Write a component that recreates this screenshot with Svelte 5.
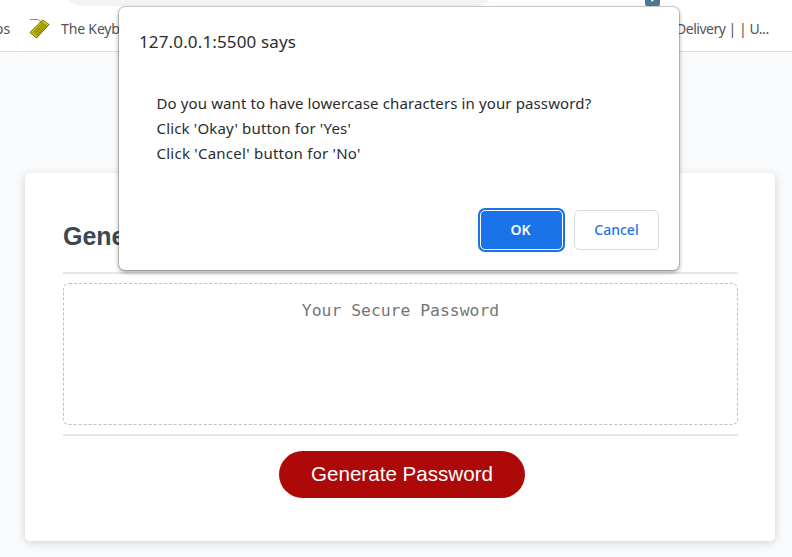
<script>
  const lines = [
    { text: 'Do you want to have lowercase characters in your password?', spacing: 0.12 },
    { text: "Click 'Okay' button for 'Yes'", spacing: 0.17 },
    { text: "Click 'Cancel' button for 'No'", spacing: 0.25 }
  ];
</script>

<div class="window">
  <header class="browser">
    <div class="omnibox"></div>
    <div class="extension">
      <svg width="15" height="6" viewBox="0 0 15 6"><path d="M0 0H15V4Q15 6 13 6H2Q0 6 0 4Z" fill="#4d7894"/><path d="M6 0H9L7.5 1.5H6Z" fill="#e8f0f4"/></svg>
    </div>
    <nav class="bookmarks">
      <span class="cut">os</span>
      <svg class="keyboard" width="22" height="22" viewBox="0 0 22 22">
        <path d="M1 1.5H9L12 4" fill="none" stroke="#8c8c8c" stroke-width="1"/>
        <path d="M13.5 2L20 6.5L7.5 20L1 14.5Z" fill="#b5ad05" stroke="#686205" stroke-width="1"/>
        <path d="M13.2 4.5L4 14.5M15 5.8L6 15.8M17 7L8 17" stroke="#6e6800" stroke-width="1" stroke-dasharray="2 1"/>
        <path d="M13.5 3L19 6.7M2.5 14.5L7.5 18.8M11.5 5L3 14" stroke="#e8df12" stroke-width="1"/>
      </svg>
      <span class="keyb">The Keyboard</span>
      <span class="delivery">Delivery | | U...</span>
    </nav>
  </header>
  <main>
    <section class="card">
      <h2>Generate a Password</h2>
      <div class="field">
        <textarea readonly placeholder="Your Secure Password" aria-label="Generated Password"></textarea>
      </div>
      <div class="actions"><button class="generate">Generate Password</button></div>
    </section>
  </main>
  <div class="dialog" role="dialog">
    <h1>127.0.0.1:5500 says</h1>
    <div class="message">
      {#each lines as line}<p style:letter-spacing="{line.spacing}px">{line.text}</p>{/each}
    </div>
    <div class="buttons">
      <button class="ok">OK</button>
      <button class="cancel">Cancel</button>
    </div>
  </div>
</div>

<style>
  * { box-sizing: border-box; }
  .window { position: relative; width: 792px; height: 557px; overflow: hidden; background: #f9fafc; font-family: "Noto Sans", sans-serif; }
  .browser { position: relative; height: 52px; background: #fff; border-bottom: 1px solid #d9dbde; }
  .omnibox { position: absolute; left: 66px; top: -24px; width: 426px; height: 30px; border-radius: 15px; background: #f1f3f4; }
  .extension { position: absolute; left: 645px; top: 0; line-height: 0; }
  .bookmarks { display: flex; align-items: center; height: 51px; padding-top: 5px; font-size: 14px; color: #505357; white-space: nowrap; }
  .cut { width: 29px; margin-left: -5px; }
  .keyboard { margin: 1px 10px 0 5px; flex: none; }
  .keyb { width: 615px; letter-spacing: -0.15px; }
  .delivery { letter-spacing: -0.48px; }
  main { padding: 121px 17px 0 25px; }
  .card { height: 368px; padding: 42px 37px 0 38px; background: #fff; border-radius: 5px; box-shadow: 0 2px 8px rgba(60, 64, 67, .2); }
  h2 { margin: 0; height: 57px; font: bold 25px/42px "Liberation Sans", sans-serif; color: #3b4852; }
  .field { height: 164px; padding: 9px 0; border-top: 2px solid #e6e6e6; border-bottom: 2px solid #e6e6e6; }
  textarea { display: block; width: 100%; height: 142px; margin: 0; padding: 16px; resize: none; border: 1px dashed #bcc0c7; border-radius: 6px; outline: 0; background: #fff; text-align: center; font: 16.4px/22px "DejaVu Sans Mono", monospace; }
  textarea::placeholder { color: #757575; opacity: 1; }
  .actions { display: flex; justify-content: center; padding: 15px 0 0 3px; }
  .generate { width: 246px; height: 47px; padding: 0 0 2px; border: 0; border-radius: 24px; background: #ae0909; color: #fff; font: 20.6px "Liberation Sans", sans-serif; }
  .dialog { position: absolute; left: 119px; top: 7px; width: 560px; height: 263px; padding: 22px 20px 20px; border-radius: 6px; background: #fff; box-shadow: 0 0 0 1px rgba(0,0,0,.16), 0 2px 5px rgba(0,0,0,.4); }
  h1 { margin: 0; font-size: 17px; font-weight: 400; line-height: 26px; letter-spacing: .14px; color: #2b2c2f; }
  .message { padding: 36px 0 0 17.5px; height: 133px; }
  p { margin: 0; font-size: 15px; line-height: 25px; color: #2b2c2f; white-space: nowrap; }
  .buttons { display: flex; justify-content: flex-end; gap: 11px; padding-top: 22px; }
  .buttons button { height: 40px; padding: 0 0 2px; border-radius: 5px; font: 500 14px "Noto Sans", sans-serif; }
  .buttons .ok { width: 83px; padding-right: 2px; border: 1px solid #fff; background: #1a73e8; color: #fff; font-weight: 600; box-shadow: 0 0 0 2px #1a73e8; }
  .buttons .cancel { width: 85px; border: 1px solid #dadce0; background: #fff; color: #2b6fe2; }
</style>
